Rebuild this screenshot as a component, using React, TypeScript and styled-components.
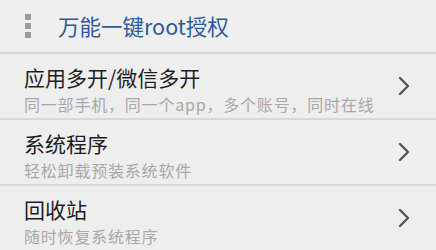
import React from "react";
import styled, { createGlobalStyle } from "styled-components";

const GlobalStyle = createGlobalStyle`
  html, body {
    margin: 0;
    padding: 0;
    background: #eeeeee;
  }
  body {
    font-family: "Noto Sans CJK SC", "Noto Sans", sans-serif;
  }
`;

const Page = styled.div`
  width: 436px;
  height: 250px;
  overflow: hidden;
  background: #eeeeee;
  display: flex;
  flex-direction: column;
`;

const Header = styled.header`
  height: 52px;
  flex-shrink: 0;
  display: flex;
  align-items: center;
  padding-left: 25px;
  background: #efefef;
  border-bottom: 2px solid #d6d6d6;
`;

const Dots = styled.div`
  display: flex;
  flex-direction: column;
  gap: 3px;
  margin-right: 27px;
`;

const Dot = styled.span`
  display: block;
  width: 6px;
  height: 6px;
  background: #9a9a9a;
`;

const Title = styled.h1`
  margin: 0;
  font-size: 21.5px;
  font-weight: 400;
  line-height: 28px;
  color: #2c5a9a;
`;

const Row = styled.div`
  height: 66px;
  box-sizing: border-box;
  flex-shrink: 0;
  display: flex;
  align-items: flex-start;
  padding: 8px 26px 0 24px;
  border-bottom: 2px solid #d8d8d8;
`;

const RowText = styled.div`
  flex: 1;
  display: flex;
  flex-direction: column;
`;

const RowTitle = styled.div`
  font-size: 21px;
  line-height: 30px;
  color: #1e1e1e;
`;

const RowSub = styled.div`
  font-size: 16px;
  line-height: 24px;
  letter-spacing: 0.8px;
  color: #a8a8a8;
`;

const ChevronBox = styled.div`
  align-self: stretch;
  display: flex;
  align-items: center;
  padding-bottom: 8px;
`;

const Chevron = () => (
  <svg width="12" height="20" viewBox="0 0 12 20">
    <path
      d="M2 2 L10 10 L2 18"
      fill="none"
      stroke="#555"
      strokeWidth="2.4"
      strokeLinecap="round"
      strokeLinejoin="round"
    />
  </svg>
);

const items = [
  { title: "应用多开/微信多开", sub: "同一部手机，同一个app，多个账号，同时在线" },
  { title: "系统程序", sub: "轻松卸载预装系统软件" },
  { title: "回收站", sub: "随时恢复系统程序" },
];

export default function App() {
  return (
    <Page>
      <GlobalStyle />
      <Header>
        <Dots>
          <Dot />
          <Dot />
          <Dot />
        </Dots>
        <Title>万能一键root授权</Title>
      </Header>
      {items.map((it) => (
        <Row key={it.title}>
          <RowText>
            <RowTitle>{it.title}</RowTitle>
            <RowSub>{it.sub}</RowSub>
          </RowText>
          <ChevronBox>
            <Chevron />
          </ChevronBox>
        </Row>
      ))}
    </Page>
  );
}
